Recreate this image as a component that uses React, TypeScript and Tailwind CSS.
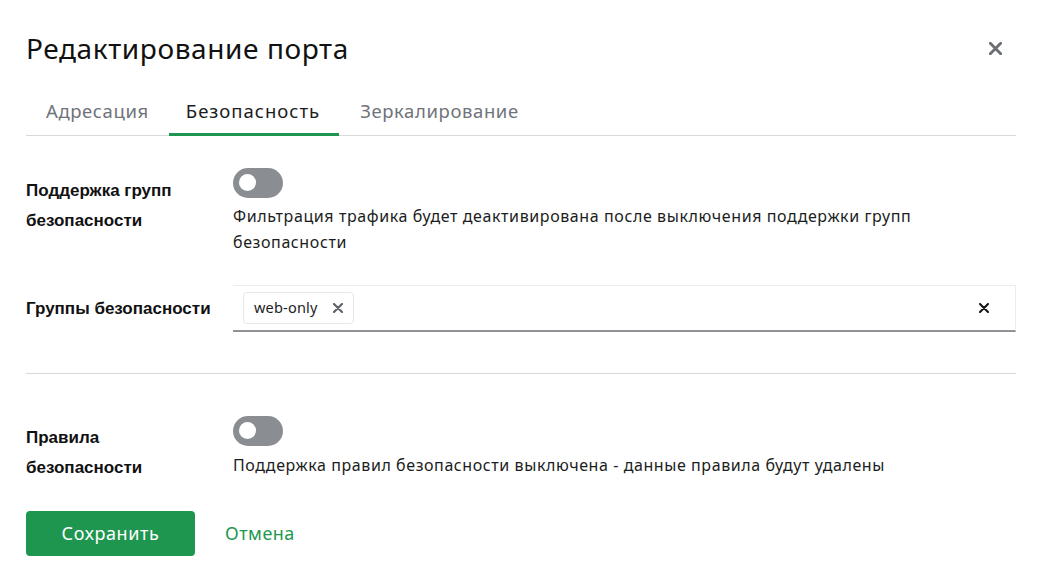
const Toggle = () => (
  <div className="w-[50px] h-[30px] rounded-full bg-[#8a8d91] flex items-center px-[6px] shrink-0">
    <div className="w-[17px] h-[17px] rounded-full bg-white" />
  </div>
);

const XIcon = ({ size, stroke, color }: { size: number; stroke: number; color: string }) => (
  <svg width={size} height={size} viewBox="0 0 10 10" fill="none">
    <path d="M1 1L9 9M9 1L1 9" stroke={color} strokeWidth={stroke} strokeLinecap="round" />
  </svg>
);

const App = () => {
  const body = { fontFamily: "'Noto Sans', 'Open Sans', sans-serif" };
  const bold = { fontFamily: "'Liberation Sans', Arial, sans-serif" };

  return (
    <div className="w-[1040px] h-[568px] bg-white pl-[26px] pr-[24px] pt-[30px] text-[#1b1d21]" style={body}>
      {/* Header */}
      <div className="flex items-center justify-between pr-[14px]">
        <h1 className="text-[28px] leading-[36px] tracking-[0.6px] text-[#111]">Редактирование порта</h1>
        <XIcon size={13} stroke={2.2} color="#6b6e73" />
      </div>

      {/* Tabs */}
      <div className="flex mt-[28px] border-b border-[#d7d9dc] text-[18.5px] tracking-[0.6px]">
        <div className="px-[20px] pb-[10px] pt-[3px] text-[#6f737a]">Адресация</div>
        <div className="pl-[17px] pr-[19px] pb-[8px] pt-[3px] tracking-[1px] text-[#1b1d21] border-b-[3px] border-[#1e9550] -mb-[1px]">Безопасность</div>
        <div className="px-[21px] pb-[10px] pt-[3px] text-[#6f737a]">Зеркалирование</div>
      </div>

      {/* Row 1 */}
      <div className="flex mt-[32px]">
        <div className="w-[207px] pt-[8px] text-[17px] leading-[30px] font-bold text-[#111]" style={bold}>
          Поддержка групп<br />безопасности
        </div>
        <div className="flex-1">
          <Toggle />
          <p className="mt-[5px] text-[16px] leading-[26px] tracking-[0.6px] text-[#1b1d21]">
            Фильтрация трафика будет деактивирована после выключения поддержки групп
            <br />безопасности
          </p>
        </div>
      </div>

      {/* Row 2 */}
      <div className="flex items-center mt-[30px]">
        <div className="w-[207px] text-[17px] font-bold text-[#111]" style={bold}>Группы безопасности</div>
        <div className="flex-1 h-[47px] flex items-center justify-between border-t border-r border-[#ececec] border-b-2 border-b-[#8f9297] pl-[10px] pr-[26px]">
          <div className="flex items-center gap-[15px] h-[32px] px-[10px] border border-[#e6e7e9] rounded-[4px]">
            <span className="text-[14.5px] tracking-[0.2px] text-[#1b1d21]">web-only</span>
            <XIcon size={10} stroke={2.2} color="#5f6368" />
          </div>
          <XIcon size={10} stroke={2} color="#111" />
        </div>
      </div>

      <div className="border-t border-[#d7d9dc] mt-[41px]" />

      {/* Row 3 */}
      <div className="flex mt-[42px]">
        <div className="w-[207px] pt-[7px] text-[17px] leading-[30px] font-bold text-[#111]" style={bold}>
          Правила<br />безопасности
        </div>
        <div className="flex-1">
          <Toggle />
          <p className="mt-[6px] text-[16px] leading-[26px] tracking-[0.58px] text-[#1b1d21]">
            Поддержка правил безопасности выключена - данные правила будут удалены
          </p>
        </div>
      </div>

      {/* Buttons */}
      <div className="flex items-center mt-[28px] gap-[30px]">
        <button className="w-[169px] h-[45px] rounded-[4px] bg-[#1e9650] text-white text-[18px] tracking-[0.6px]">Сохранить</button>
        <button className="text-[18px] tracking-[0.5px] text-[#1e9650]">Отмена</button>
      </div>
    </div>
  );
};

export default App;
